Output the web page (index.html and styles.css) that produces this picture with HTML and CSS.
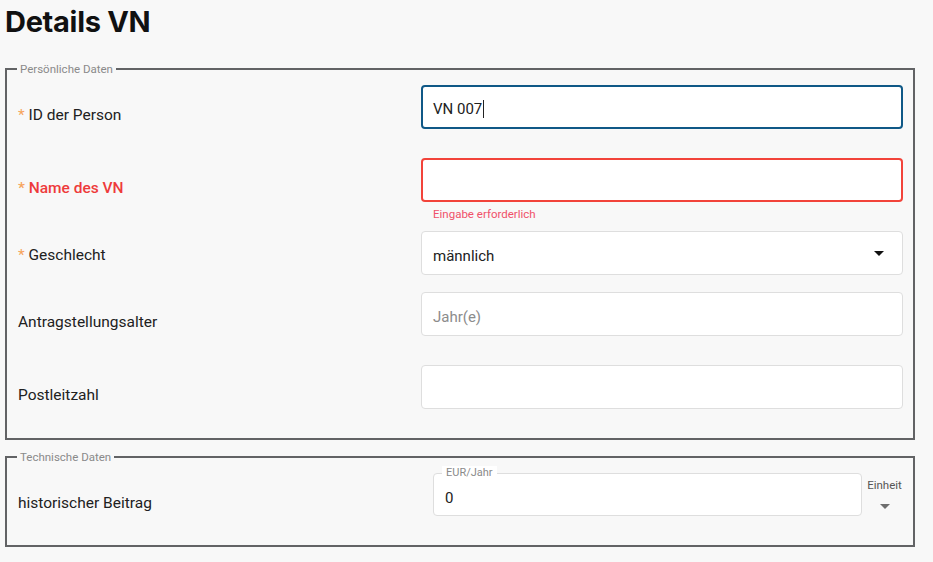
FILE: index.html
```html
<!DOCTYPE html>
<html lang="de">
<head>
  <meta charset="UTF-8" />
  <meta name="viewport" content="width=device-width, initial-scale=1.0"/>
  <title>Details VN</title>
  <link rel="stylesheet" href="styles.css">
</head>
<body>
  <h1 class="page-title">Details VN</h1>

  <fieldset class="group">
    <legend>Persönliche Daten</legend>

    <div class="row">
      <div class="row-label"><span class="req">*</span> ID der Person</div>
      <div class="field">
        <div class="input focused">VN 007<span class="caret"></span></div>
      </div>
    </div>

    <div class="row">
      <div class="row-label error"><span class="req">*</span> Name des VN</div>
      <div class="field">
        <div class="input invalid"></div>
        <div class="hint">Eingabe erforderlich</div>
      </div>
    </div>

    <div class="row row-select">
      <div class="row-label"><span class="req">*</span> Geschlecht</div>
      <div class="field">
        <div class="input select">männlich<span class="arrow"></span></div>
      </div>
    </div>

    <div class="row">
      <div class="row-label">Antragstellungsalter</div>
      <div class="field">
        <div class="input"><span class="placeholder">Jahr(e)</span></div>
      </div>
    </div>

    <div class="row">
      <div class="row-label">Postleitzahl</div>
      <div class="field">
        <div class="input"></div>
      </div>
    </div>
  </fieldset>

  <fieldset class="group">
    <legend>Technische Daten</legend>

    <div class="row">
      <div class="row-label">historischer Beitrag</div>
      <div class="field unit-field">
        <div class="input outlined">
          <span class="notch">EUR/Jahr</span>
          0
        </div>
        <div class="unit">
          <span class="unit-label">Einheit</span>
          <span class="arrow grey"></span>
        </div>
      </div>
    </div>
  </fieldset>
</body>
</html>
```

FILE: styles.css
```css
body {
  background-color: #f8f8f8;
  font-family: Roboto, "Liberation Sans", sans-serif;
  margin: 0;
  padding: 0 5px;
  color: #212121;
}

.page-title {
  font-family: Inter, "DejaVu Sans", sans-serif;
  font-weight: 700;
  font-size: 29px;
  letter-spacing: -0.3px;
  line-height: 40px;
  margin: 2px 0 21px 0;
  color: #111;
}

.group {
  width: 886px;
  margin: 0 0 11px 0;
  padding: 10px 10px 0 10px;
  border: 2px solid #626365;
}

.group legend {
  font-size: 11.5px;
  line-height: 12px;
  color: #8a8a8a;
  padding: 0 3px;
  margin-left: 0;
}

.row {
  display: grid;
  grid-template-columns: 404px 1fr;
  padding-bottom: 29px;
}

.row-select {
  padding-bottom: 17px;
}

.row-label {
  font-size: 15.5px;
  line-height: 18px;
  padding-top: 21px;
  padding-left: 1px;
}

.row-select .row-label {
  padding-top: 15px;
}

.row-label.error {
  color: #ee3b3b;
  font-weight: 500;
}

.req {
  color: #f6a45d;
}

.field {
  position: relative;
}

.input {
  box-sizing: border-box;
  height: 44px;
  background: white;
  border: 1px solid #dedede;
  border-radius: 4px;
  padding: 5px 11px 0 11px;
  font-size: 15px;
  display: flex;
  align-items: center;
  position: relative;
}

.input.focused {
  border: 2px solid #0f5886;
  padding: 4px 10px 0 10px;
}

.input.invalid {
  border: 2px solid #f2433a;
}

.caret {
  display: inline-block;
  width: 1px;
  height: 18px;
  background: #222;
  margin-left: 1px;
}

.placeholder {
  color: #8c8c8c;
}

.hint {
  position: absolute;
  top: 50px;
  left: 12px;
  font-size: 11.5px;
  line-height: 13px;
  color: #f0506a;
}

.select .arrow {
  margin-left: auto;
  margin-right: 7px;
  margin-top: -5px;
}

.arrow {
  width: 0;
  height: 0;
  border-left: 5px solid transparent;
  border-right: 5px solid transparent;
  border-top: 5px solid #111;
}

.arrow.grey {
  border-top-color: #6e6e6e;
}

.unit-field {
  display: flex;
  padding-left: 12px;
  gap: 4px;
}

.outlined {
  flex: 1;
  height: 43px;
  padding-top: 6px;
}

.notch {
  position: absolute;
  top: -8px;
  left: 8px;
  padding: 0 4px;
  background: white;
  font-size: 11px;
  line-height: 13px;
  color: #8a8a8a;
}

.unit {
  width: 37px;
  display: flex;
  flex-direction: column;
  align-items: center;
}

.unit-label {
  font-size: 11.5px;
  line-height: 14px;
  color: #555;
  margin-top: 5px;
}

.unit .arrow {
  margin-top: 12px;
}
```
